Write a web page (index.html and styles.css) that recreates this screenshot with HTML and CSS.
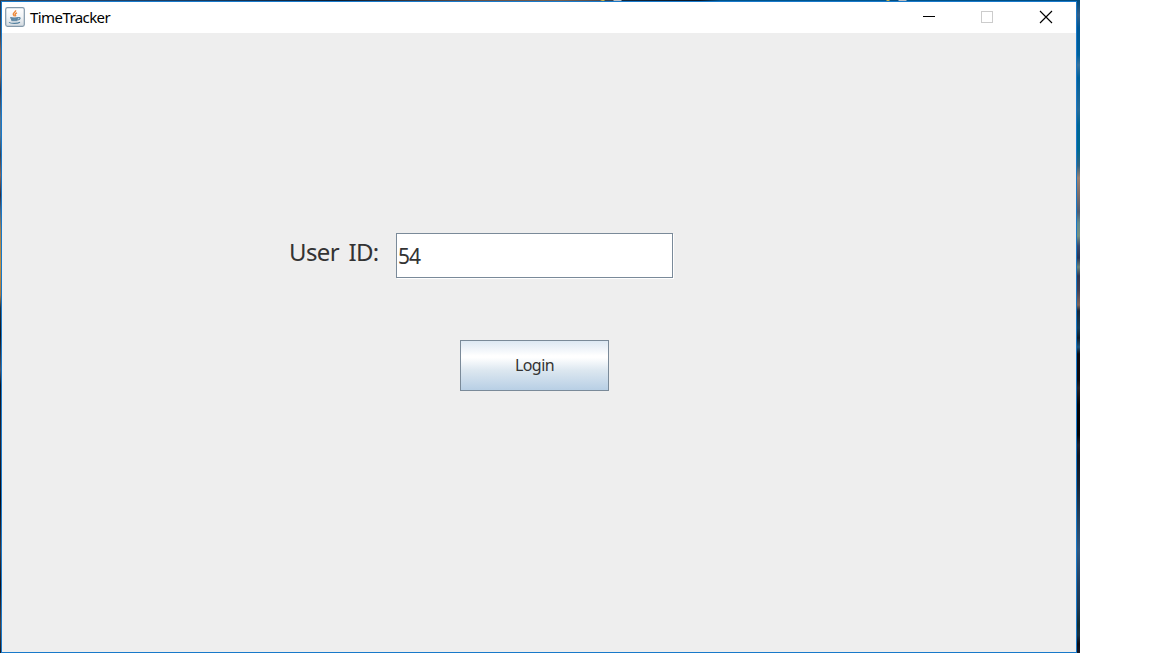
FILE: index.html
```
<!DOCTYPE html>
<html lang="en">
<head>
<meta charset="utf-8">
<title>TimeTracker</title>
<link rel="stylesheet" href="styles.css">
</head>
<body>
<div class="desktop">
  <main class="window">
    <header class="titlebar">
      <svg class="app-icon" width="20" height="20" viewBox="0 0 20 20" fill="none">
        <defs><linearGradient id="tile" x1="0" y1="0" x2="0" y2="1"><stop offset="0" stop-color="#fff"/><stop offset=".5" stop-color="#f2f4f6"/><stop offset="1" stop-color="#d3dae0"/></linearGradient></defs>
        <rect x=".7" y=".7" width="18.6" height="18.6" rx="1.8" fill="url(#tile)" stroke="#8499aa" stroke-width="1.2"/>
        <path d="M10.6 3.2c.5 1.9-2.8 2.3-2.3 4.3.2.8 1 1 1.2 1.8M12 5.8c-1.8.6-2.4 1.4-1.6 2.2.4.5.3.9-.1 1.3" stroke="#ec8a3c" stroke-width="1.4"/>
        <path d="M5.4 10.6h8l-1 3.6H6.6z" fill="#7c9db5"/>
        <path d="M5.3 10.6c2 .6 6 .6 8.1 0M6.2 12.6c1.8.5 4.6.5 6.3 0M13.4 10.7c2.6-.6 2.2 1.7-.5 2.3M4 15.4c2 1.3 8.6 1.3 11-.2" stroke="#54809f" stroke-width="1.1"/>
      </svg>
      <span class="title">TimeTracker</span>
      <div class="controls">
        <svg width="58" height="31" viewBox="0 0 58 31" shape-rendering="crispEdges"><path d="M22 14.5h12" stroke="#000"/></svg>
        <svg width="58" height="31" viewBox="0 0 58 31" shape-rendering="crispEdges"><rect x="22.5" y="9.5" width="11" height="11" fill="none" stroke="#ccc"/></svg>
        <svg width="59" height="31" viewBox="0 0 59 31"><path d="M23 9l12 12M35 9l-12 12" stroke="#000" stroke-width="1.15"/></svg>
      </div>
    </header>
    <form class="login">
      <div class="field-row">
        <label class="label" for="user-id">User ID:</label>
        <input class="field" id="user-id" type="text" value="54">
      </div>
      <button class="button" type="button"><span class="button-text">Login</span></button>
    </form>
  </main>
</div>
</body>
</html>
```
FILE: styles.css
```
* { box-sizing: border-box; }
body { margin: 0; background: #fff; overflow: hidden; font-family: "Noto Sans", "Open Sans", sans-serif; }

/* Strips of the wallpaper show around the window. */
.desktop {
  width: 1080px;
  height: 653px;
  padding: 1px 3px 0 1px;
  background:
    linear-gradient(90deg, #3c4653 0, #29466a 60px, #1a3c60 200px, #0c1e33 340px, #665249 480px, #75604f 560px, #514b4b 600px, #c6b24b 602px, #c6b24b 604px, #37424c 605px, #37424c 613px, #b9bdc2 614px, #b9bdc2 621px, #10283f 622px, #081728 700px, #00538a 720px, #00568f 886px, #c6b24b 887px, #c6b24b 889px, #064e80 890px, #064e80 898px, #b9bdc2 899px, #b9bdc2 906px, #00538a 907px, #004d80 1080px) 0 0 / 1080px 1px no-repeat,
    linear-gradient(#203a58 0, #3b4554 35px, #8a6152 50px, #83614f 75px, #343b52 90px, #57738d 118px, #527695 135px, #3a4455 155px, #8c6554 175px, #352e3c 195px, #4b6684 210px, #a9824f 230px, #c39143 265px, #ae783d 295px, #26303a 308px, #11151d 335px, #4e5060 370px, #10131e 385px, #252634 440px, #090b15 500px, #3c363d 550px, #121019 585px, #4b4141 625px, #171820 653px) 0 0 / 1px 653px no-repeat,
    linear-gradient(#004b7b 0, #315f8a 15px, #005895 28px, #00619b 55px, #3a7199 65px, #006099 78px, #286b96 110px, #006594 125px, #006a91 150px, #37637c 166px, #9c8170 178px, #806e69 194px, #505d70 212px, #648a8d 223px, #78917f 236px, #39496b 246px, #283556 258px, #6d8276 267px, #303650 276px, #443f50 290px, #806358 305px, #172638 311px, #173d57 328px, #0e1a26 338px, #205276 347px, #0c0b11 354px, #100b0d 380px, #292224 388px, #050406 405px, #030305 435px, #20202b 445px, #101520 456px, #182535 485px, #26435f 520px, #31587f 550px, #243f5e 585px, #1e3850 608px, #122c31 625px, #183042 635px, #0d0b14 644px, #171722 653px) 1077px 0 / 3px 653px no-repeat;
}
.window { display: flex; flex-direction: column; height: 652px; border: 1px solid #1879ca; background: #eee; }
.titlebar { display: flex; height: 31px; padding-left: 3px; background: #fff; }
.app-icon { flex: none; margin-top: 5px; }
.title { margin: 5px 0 0 5px; font-size: 15px; line-height: 20px; letter-spacing: -.58px; color: #000; }
.controls { display: flex; margin-left: auto; }

.login { display: flex; flex-direction: column; padding: 200px 0 0 287px; }
.field-row { display: flex; }
.label { width: 107px; height: 40px; font-size: 24px; line-height: 38px; letter-spacing: -.65px; word-spacing: 4px; color: #333; white-space: nowrap; }
.field { width: 277px; height: 45px; padding: 0 0 0 1px; border: 1px solid #7a8a99; border-radius: 0; outline: 0; background: #fff; box-shadow: 1px 1px 0 #fff; font: 21px "Noto Sans", sans-serif; letter-spacing: -1px; color: #333; }
.button { width: 149px; height: 51px; margin: 62px 0 0 171px; padding: 0 0 2px; border: 1px solid #7a8a99; border-radius: 0; background: linear-gradient(#dde8f3 0, #fff 30%, #fff 34%, #dce7f0 60%, #b8cfe5 100%); font: 16px "Noto Sans", sans-serif; letter-spacing: -.55px; color: #333; }
.button-text { display: block; }
```
